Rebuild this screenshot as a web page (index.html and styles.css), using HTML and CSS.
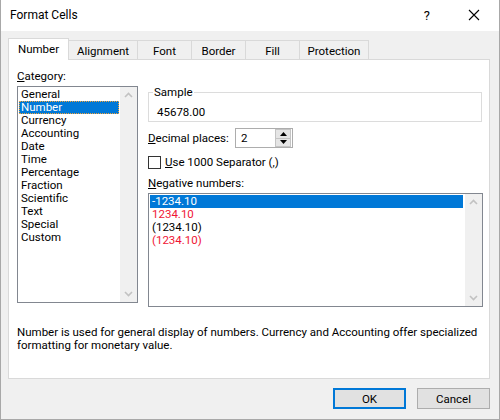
FILE: index.html
```html
<!DOCTYPE html>
<html lang="en">
<head>
    <meta charset="UTF-8">
    <title>Format Cells</title>
    <link rel="stylesheet" href="styles.css">
</head>
<body>
    <div class="window">
        <!-- Title bar -->
        <div class="titlebar">
            <span class="title">Format Cells</span>
            <span class="help">?</span>
            <svg class="close" width="12" height="12" viewBox="0 0 12 12">
                <path d="M1 1 L11 11 M11 1 L1 11" stroke="#000" stroke-width="1.1" fill="none"/>
            </svg>
        </div>

        <div class="dialog">
            <div class="tabs">
                <div class="tab active">Number</div>
                <div class="tab w69">Alignment</div>
                <div class="tab">Font</div>
                <div class="tab">Border</div>
                <div class="tab">Fill</div>
                <div class="tab w69">Protection</div>
            </div>

            <div class="panel">
                <div class="columns">
                    <div class="cat-col">
                        <div class="label"><u>C</u>ategory:</div>
                        <div class="listbox cat-list">
                            <ul class="items">
                                <li>General</li>
                                <li class="selected focus">Number</li>
                                <li>Currency</li>
                                <li>Accounting</li>
                                <li>Date</li>
                                <li>Time</li>
                                <li>Percentage</li>
                                <li>Fraction</li>
                                <li>Scientific</li>
                                <li>Text</li>
                                <li>Special</li>
                                <li>Custom</li>
                            </ul>
                            <div class="scrollbar">
                                <svg width="17" height="17" viewBox="0 0 17 17"><path d="M5 10 L8.5 6.5 L12 10" stroke="#c2c2c2" stroke-width="1.6" fill="none"/></svg>
                                <svg width="17" height="17" viewBox="0 0 17 17"><path d="M5 7 L8.5 10.5 L12 7" stroke="#c2c2c2" stroke-width="1.6" fill="none"/></svg>
                            </div>
                        </div>
                    </div>

                    <div class="main-col">
                        <fieldset class="sample">
                            <legend>Sample</legend>
                            <div class="sample-value">45678.00</div>
                        </fieldset>

                        <div class="decimal-row">
                            <span class="decimal-label"><u>D</u>ecimal places:</span>
                            <div class="spinner">
                                <span class="spin-value">2</span>
                                <div class="spin-buttons">
                                    <div class="spin-btn"><svg width="7" height="4" viewBox="0 0 7 4"><path d="M0 4 L3.5 0 L7 4 Z" fill="#000"/></svg></div>
                                    <div class="spin-btn"><svg width="7" height="4" viewBox="0 0 7 4"><path d="M0 0 L3.5 4 L7 0 Z" fill="#000"/></svg></div>
                                </div>
                            </div>
                        </div>

                        <div class="check-row">
                            <span class="checkbox"></span>
                            <span><u>U</u>se 1000 Separator (,)</span>
                        </div>

                        <div class="label neg-label"><u>N</u>egative numbers:</div>
                        <div class="listbox neg-list">
                            <ul class="items">
                                <li class="selected">-1234.10</li>
                                <li class="red">1234.10</li>
                                <li>(1234.10)</li>
                                <li class="red">(1234.10)</li>
                            </ul>
                            <div class="scrollbar">
                                <svg width="17" height="17" viewBox="0 0 17 17"><path d="M5 10 L8.5 6.5 L12 10" stroke="#c2c2c2" stroke-width="1.6" fill="none"/></svg>
                                <svg width="17" height="17" viewBox="0 0 17 17"><path d="M5 7 L8.5 10.5 L12 7" stroke="#c2c2c2" stroke-width="1.6" fill="none"/></svg>
                            </div>
                        </div>
                    </div>
                </div>

                <p class="desc">Number is used for general display of numbers. Currency and Accounting offer specialized formatting for monetary value.</p>
            </div>

            <div class="buttons">
                <button class="btn default">OK</button>
                <button class="btn">Cancel</button>
            </div>
        </div>
    </div>
</body>
</html>
```

FILE: styles.css
```css
* {
    margin: 0;
    padding: 0;
    box-sizing: border-box;
}

body {
    background-color: #f0f0f0;
    font-family: Roboto, "Noto Sans", Arial, sans-serif;
    font-size: 11.5px;
    color: #000;
}

.window {
    width: 500px;
    height: 420px;
    border: 1px solid #a8a8a8;
    border-top: none;
    background-color: #f0f0f0;
    display: flex;
    flex-direction: column;
}

/* Title bar */
.titlebar {
    height: 31px;
    background-color: #fff;
    display: flex;
    align-items: center;
    padding: 0 0 1px 9px;
}

.title {
    flex: 1;
    font-size: 12px;
}

.help {
    font-size: 13px;
    margin-right: 38px;
}

.close {
    margin-right: 19px;
}

/* Dialog body */
.dialog {
    padding: 7px 9px 0 7px;
    display: flex;
    flex-direction: column;
}

.tabs {
    display: flex;
    align-items: flex-end;
    height: 21px;
    position: relative;
    z-index: 1;
}

.tab {
    width: 55px;
    height: 19px;
    margin-left: -1px;
    border: 1px solid #d9d9d9;
    border-bottom: none;
    background-color: #f0f0f0;
    display: flex;
    align-items: center;
    justify-content: center;
    padding-top: 1px;
    white-space: nowrap;
}

.tab.w69 {
    width: 70px;
}

.tab.active {
    width: 61px;
    height: 22px;
    margin-left: 0;
    margin-bottom: -1px;
    background-color: #fff;
    padding-top: 0;
    padding-bottom: 2px;
}

.panel {
    height: 320px;
    background-color: #fff;
    border: 1px solid #d9d9d9;
    padding: 8px 6px 0 8px;
}

.columns {
    display: flex;
    gap: 10px;
}

.cat-col {
    width: 121px;
}

.label {
    height: 16px;
    line-height: 16px;
}

/* List boxes */
.listbox {
    border: 1px solid #828790;
    display: flex;
    margin-top: 2px;
}

.cat-list {
    height: 217px;
}

.items {
    list-style: none;
    flex: 1;
    padding: 1px 1px 0 1px;
}

.items li {
    height: 13px;
    line-height: 13px;
    padding-left: 2px;
    white-space: nowrap;
}

.items li.selected {
    background-color: #0078d7;
    color: #fff;
}

.items li.focus {
    outline: 1px dotted #f2a33a;
    outline-offset: -1px;
}

.items li.red {
    color: #f01535;
}

.scrollbar {
    width: 17px;
    background-color: #f0f0f0;
    display: flex;
    flex-direction: column;
    justify-content: space-between;
}

.main-col {
    width: 335px;
    padding-top: 16px;
}

.sample {
    width: 334px;
    border: 1px solid #dcdcdc;
    padding: 4px 8px 1px 8px;
}

.sample legend {
    margin-left: -4px;
    padding: 0 1px;
    line-height: 16px;
}

.sample-value {
    line-height: 16px;
}

.decimal-row {
    display: flex;
    align-items: center;
    margin-top: 6px;
}

.decimal-label {
    width: 87px;
    white-space: nowrap;
}

.spinner {
    width: 58px;
    height: 20px;
    border: 1px solid #adadad;
    display: flex;
    align-items: center;
}

.spin-value {
    flex: 1;
    padding-left: 5px;
}

.spin-buttons {
    width: 16px;
    height: 18px;
    margin-right: 1px;
    display: flex;
    flex-direction: column;
}

.spin-btn {
    flex: 1;
    background-color: #e5e5e5;
    border: 1px solid #c4c4c4;
    display: flex;
    align-items: center;
    justify-content: center;
}

.spin-btn + .spin-btn {
    border-top: none;
}

.check-row {
    display: flex;
    align-items: center;
    gap: 4px;
    margin-top: 7px;
    height: 14px;
}

.checkbox {
    width: 13px;
    height: 13px;
    border: 1px solid #333;
    background-color: #fff;
}

.neg-label {
    margin-top: 6px;
}

.neg-list {
    height: 114px;
}

.neg-list .items li {
    margin-right: 1px;
}

.desc {
    margin-top: 19px;
    line-height: 13px;
}

/* Buttons */
.buttons {
    display: flex;
    justify-content: flex-end;
    gap: 11px;
    margin-top: 9px;
}

.btn {
    width: 73px;
    height: 21px;
    background-color: #e1e1e1;
    border: 1px solid #adadad;
    font-family: Roboto, "Noto Sans", Arial, sans-serif;
    font-size: 11.5px;
    color: #000;
}

.btn.default {
    border: 2px solid #0078d7;
}
```
